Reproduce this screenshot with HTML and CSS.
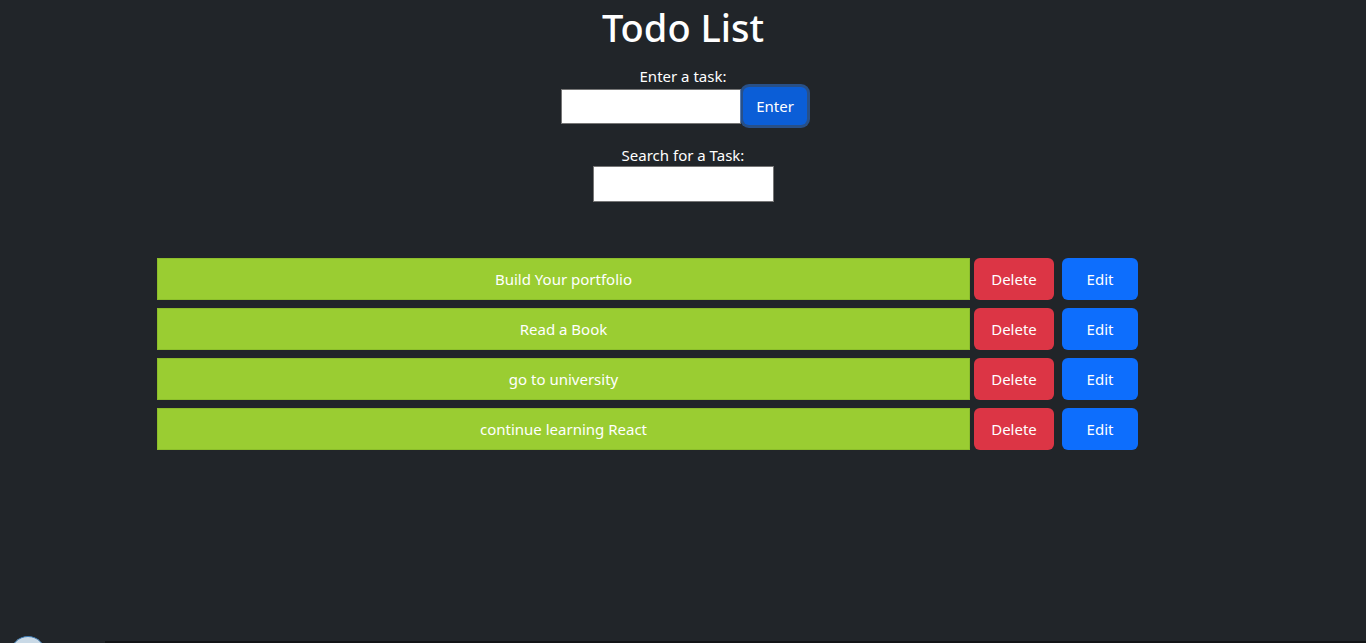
FILE: index.html
```html
<!DOCTYPE html>
<html lang="en">
<head>
<meta charset="utf-8">
<title>Todo List</title>
<link rel="stylesheet" href="styles.css">
</head>
<body>
<div class="app">
  <h1 class="title">Todo List</h1>
  <div class="field">
    <label class="label" for="task">Enter a task:</label>
    <div class="entry">
      <input id="task" class="input" type="text">
      <button class="btn btn-enter">Enter</button>
    </div>
  </div>
  <div class="field search">
    <label class="label" for="search">Search for a Task:</label>
    <input id="search" class="input input-search" type="text">
  </div>
  <ul class="list">
    <li class="row"><div class="task">Build Your portfolio</div><button class="btn btn-delete">Delete</button><button class="btn btn-edit">Edit</button></li>
    <li class="row"><div class="task">Read a Book</div><button class="btn btn-delete">Delete</button><button class="btn btn-edit">Edit</button></li>
    <li class="row"><div class="task">go to university</div><button class="btn btn-delete">Delete</button><button class="btn btn-edit">Edit</button></li>
    <li class="row"><div class="task">continue learning React</div><button class="btn btn-delete">Delete</button><button class="btn btn-edit">Edit</button></li>
  </ul>
</div>
<div class="widget"></div>
<div class="bottom-strip"></div>
</body>
</html>
```
FILE: styles.css
```css
html, body {
  margin: 0;
  padding: 0;
  height: 100%;
  background: #212529;
  overflow: hidden;
}
body {
  font-family: "Noto Sans", "Open Sans", sans-serif;
  font-size: 15px;
  color: #fff;
  position: relative;
}
.app {
  display: flex;
  flex-direction: column;
  align-items: center;
}
.title {
  margin: 1px 0 0;
  font-size: 38px;
  font-weight: 500;
  line-height: 52px;
  letter-spacing: 0;
}
.field {
  display: flex;
  flex-direction: column;
  align-items: center;
  margin-top: 12px;
}
.label {
  line-height: 22px;
  margin-bottom: 0;
}
.entry {
  display: flex;
  align-items: center;
  margin-left: 2px;
}
.input {
  box-sizing: border-box;
  width: 181px;
  height: 35px;
  border: 1px solid #767676;
  background: #fff;
  margin: 0;
  padding: 0 4px;
  font-family: inherit;
}
.entry .input {
  width: 180px;
}
.btn {
  font-family: inherit;
  font-size: 15px;
  color: #fff;
  border: 0;
  border-radius: 6px;
  height: 42px;
  padding: 0;
  cursor: pointer;
}
.btn-enter {
  width: 64px;
  height: 38px;
  background: #0b5ed7;
  margin-left: 2px;
  box-shadow: 0 0 0 3px rgba(49, 132, 253, 0.45);
  position: relative;
  z-index: 1;
}
.search {
  margin-top: 19px;
}
.input-search {
  height: 36px;
}
.list {
  list-style: none;
  margin: 56px 0 0;
  padding: 0 0 0 157px;
  align-self: stretch;
  display: flex;
  flex-direction: column;
  gap: 8px;
}
.row {
  display: flex;
  align-items: stretch;
  height: 42px;
}
.task {
  box-sizing: border-box;
  width: 813px;
  background: #9acd32;
  border: 1px solid #8cbe2b;
  display: flex;
  align-items: center;
  justify-content: center;
}
.btn-delete {
  width: 80px;
  background: #dc3545;
  margin-left: 4px;
}
.btn-edit {
  width: 76px;
  background: #0d6efd;
  margin-left: 8px;
}
.widget {
  position: absolute;
  left: 10px;
  top: 636px;
  width: 34px;
  height: 34px;
  border-radius: 50%;
  background: #c9d9e6;
  border: 1px solid #3d7bb3;
}
.bottom-strip {
  position: absolute;
  left: 105px;
  right: 0;
  top: 641px;
  height: 2px;
  background: #121416;
}
```
